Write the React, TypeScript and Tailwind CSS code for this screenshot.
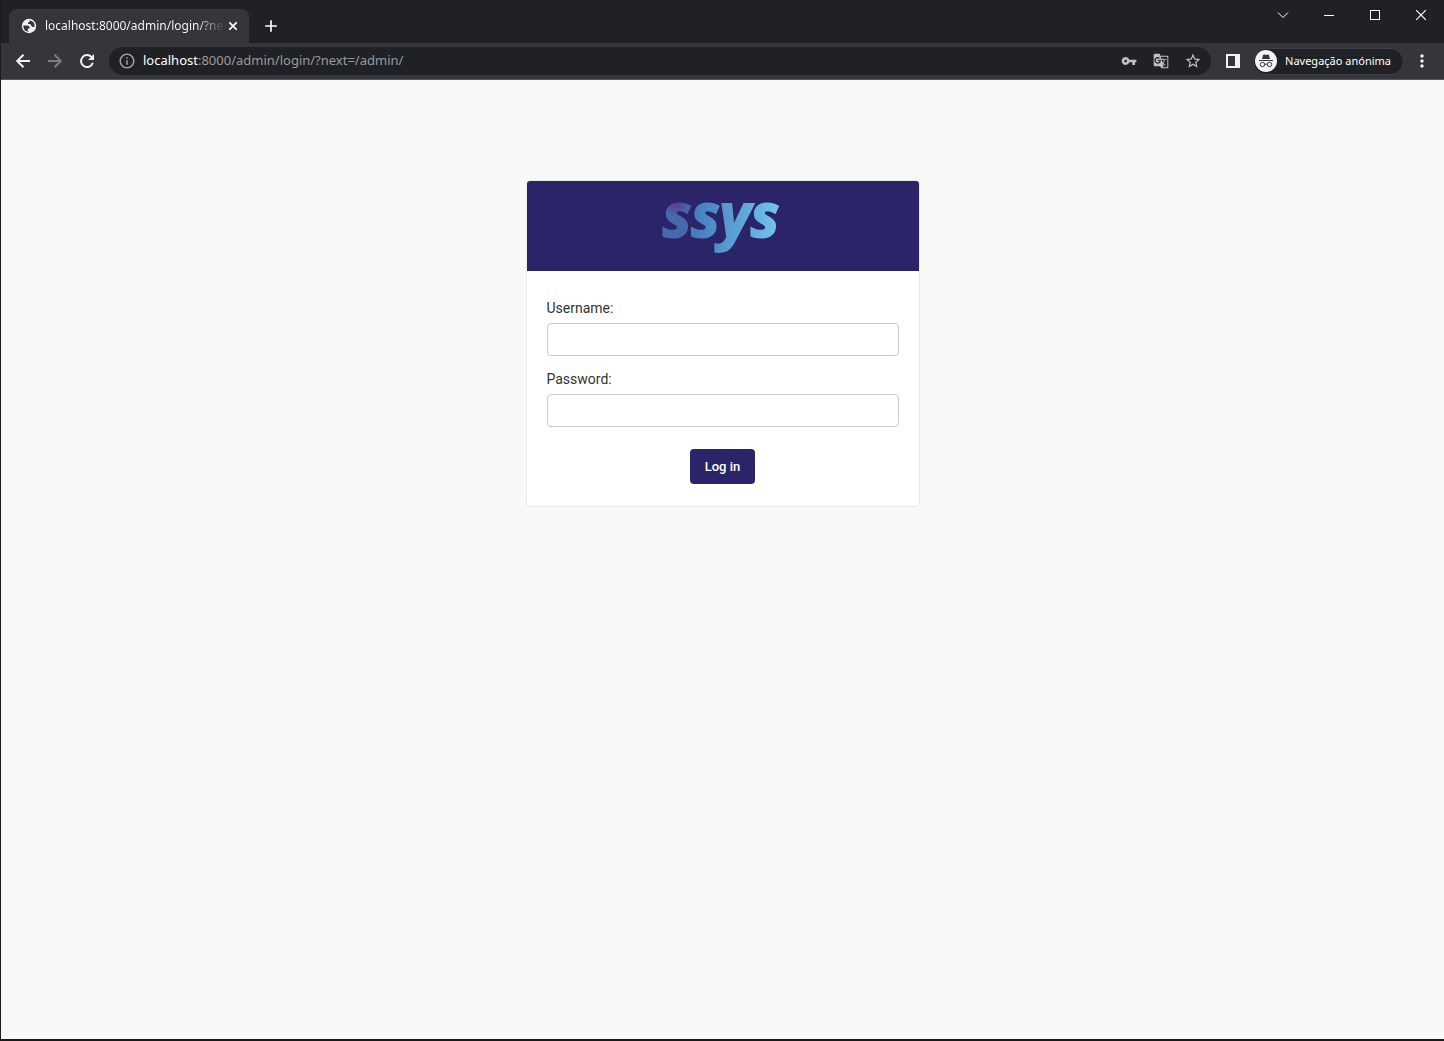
import type { ReactNode } from "react";
import {
  MdInfoOutline,
  MdVpnKey,
  MdGTranslate,
  MdStarBorder,
  MdMoreVert,
  MdAdd,
} from "react-icons/md";

function IconButton({ label, className, children }: { label: string; className: string; children: ReactNode }) {
  return (
    <button type="button" aria-label={label} className={`flex shrink-0 items-center justify-center ${className}`}>
      {children}
    </button>
  );
}

function LineIcon({ size, d }: { size: number; d: string }) {
  return (
    <svg width={size} height={size} viewBox={`0 0 ${size} ${size}`} fill="none" stroke="currentColor" strokeWidth="2">
      <path d={d} />
    </svg>
  );
}

function GlobeIcon() {
  return (
    <svg width="16" height="16" viewBox="0 0 16 16" className="shrink-0">
      <circle cx="8" cy="8" r="7.2" fill="#f1f3f4" />
      <path
        d="M2.3 7.4H6.2Q8.4 7.6 8.6 9.2V10.6H7L6.6 12.200 8 13.700Q2.300 13.600 2.300 7.400ZM8 2.300 9 3.400 7 4.600V6H9.200L10.200 7.800 11.800 9H13.600Q14.200 3 8 2.300Z"
        fill="#35363a"
      />
    </svg>
  );
}

function TitleBar() {
  return (
    <header className="flex h-[43px] items-end justify-between bg-[#202124] pl-2">
      <div className="flex items-end">
        <div className="flex h-[34px] w-60 items-center rounded-t-lg bg-[#35363a] pr-2 pl-3">
          <GlobeIcon />
          <span className="ml-2 min-w-0 flex-1 overflow-hidden whitespace-nowrap bg-linear-to-r from-white from-85% to-[#45464a] bg-clip-text text-xs text-transparent">
            localhost:8000/admin/login/?next=/admin/
          </span>
          <IconButton label="Close tab" className="ml-0.5 size-4 text-white">
            <svg width="8" height="8" viewBox="0 0 8 8" fill="none" stroke="currentColor" strokeWidth="1.7">
              <path d="M0 0 8 8M8 0 0 8" />
            </svg>
          </IconButton>
        </div>
        <IconButton label="New tab" className="ml-3 h-[34px] w-5 text-white">
          <MdAdd size={20} />
        </IconButton>
      </div>
      <div className="flex self-start text-white">
        <IconButton label="Search tabs" className="h-[30px] w-[46px]">
          <svg width="12" height="8" viewBox="0 0 12 8" fill="none" stroke="currentColor">
            <path d="M1 1.5 6 6.5 11 1.5" />
          </svg>
        </IconButton>
        <IconButton label="Minimize" className="h-[30px] w-[46px]">
          <svg width="10" height="1" viewBox="0 0 10 1" fill="currentColor">
            <rect width="10" height="1" />
          </svg>
        </IconButton>
        <IconButton label="Maximize" className="h-[30px] w-[46px]">
          <svg width="10" height="10" viewBox="0 0 10 10" fill="none" stroke="currentColor">
            <rect x="0.5" y="0.5" width="9" height="9" />
          </svg>
        </IconButton>
        <IconButton label="Close" className="h-[30px] w-[46px]">
          <svg width="10" height="10" viewBox="0 0 10 10" fill="none" stroke="currentColor" strokeWidth="1.2">
            <path d="M0 0 10 10M10 0 0 10" />
          </svg>
        </IconButton>
      </div>
    </header>
  );
}

function Toolbar() {
  return (
    <nav className="flex h-[37px] items-center border-b border-[#56575a] bg-[#35363a] px-3">
      <IconButton label="Back" className="size-5 text-[#f1f3f4]">
        <LineIcon size={20} d="M17 10H4.500M10.500 3.700 4.200 10 10.500 16.300" />
      </IconButton>
      <IconButton label="Forward" className="ml-3 size-5 text-[#7c7d80]">
        <LineIcon size={20} d="M3 10H15.500M9.500 3.700 15.800 10 9.500 16.300" />
      </IconButton>
      <IconButton label="Reload" className="ml-3 size-5 text-[#f1f3f4]">
        <svg width="20" height="20" viewBox="0 0 20 20" fill="none">
          <path d="M15.800 11.800A6 6 0 1 1 14.400 5.900" stroke="currentColor" strokeWidth="2" />
          <path d="M17 3V9H11Z" fill="currentColor" />
        </svg>
      </IconButton>
      <div className="ml-3 flex h-7 min-w-0 flex-1 items-center rounded-full bg-[#202124] px-2 text-[#bdc1c6]">
        <MdInfoOutline className="size-5 shrink-0 p-px text-[#9aa0a6]" />
        <p className="ml-1.5 min-w-0 flex-1 truncate text-[13px] text-[#9a9b9d]">
          <span className="text-white">localhost</span>:8000/admin/login/?next=/admin/
        </p>
        <IconButton label="Saved passwords" className="size-4">
          <MdVpnKey size={16} />
        </IconButton>
        <IconButton label="Translate" className="ml-4 size-4">
          <MdGTranslate size={16} />
        </IconButton>
        <IconButton label="Bookmark" className="ml-3.5 size-5">
          <MdStarBorder size={18} />
        </IconButton>
      </div>
      <IconButton label="Side panel" className="ml-3.5 size-4 text-[#f1f3f4]">
        <svg width="14" height="14" viewBox="0 0 14 14" fill="currentColor" fillRule="evenodd">
          <path d="M0 0H14V14H0ZM2 2V12H9V2Z" />
        </svg>
      </IconButton>
      <button
        type="button"
        className="ml-3 flex h-[27px] shrink-0 items-center rounded-full border border-[#3f4044] bg-[#202124] pr-3 pl-px text-[11px] text-white"
      >
        <svg width="22" height="22" viewBox="0 0 22 22" className="mr-2">
          <circle cx="11" cy="11" r="11" fill="#f1f3f4" />
          <path d="M7 9 8 5.2Q8.4 4.3 9.3 4.6L11 5.1 12.7 4.6Q13.6 4.3 14 5.2L15 9Z" fill="#35363a" />
          <g fill="none" stroke="#35363a">
            <path d="M4 10.5H18M9.5 14.5Q11 13.5 12.5 14.5" />
            <circle cx="7.5" cy="14.5" r="2.2" />
            <circle cx="14.5" cy="14.5" r="2.2" />
          </g>
        </svg>
        Navegação anónima
      </button>
      <IconButton label="Menu" className="ml-2 size-5 text-[#f1f3f4]">
        <MdMoreVert size={20} />
      </IconButton>
    </nav>
  );
}

function Logo() {
  return (
    <svg width="130" height="80" viewBox="0 0 130 80" role="img" aria-label="ssys" className="overflow-visible">
      <defs>
        <linearGradient id="brand" gradientUnits="userSpaceOnUse" x1="5" y1="0" x2="122" y2="0">
          <stop offset="0" stopColor="#4669ae" />
          <stop offset="0.25" stopColor="#447bbd" />
          <stop offset="0.6" stopColor="#5a9ed3" />
          <stop offset="1" stopColor="#72c5ee" />
        </linearGradient>
        <radialGradient id="accent" gradientUnits="userSpaceOnUse" cx="18" cy="23" r="13">
          <stop offset="0" stopColor="#5d3f92" />
          <stop offset="0.4" stopColor="#554c99" />
          <stop offset="1" stopColor="#4669ae" />
        </radialGradient>
      </defs>
      <text
        x="63"
        y="56"
        textAnchor="middle"
        fill="url(#brand)"
        stroke="url(#brand)"
        strokeWidth="2"
        className="font-['Open_Sans',sans-serif] text-[60px] font-bold italic"
      >
        <tspan fill="url(#accent)" stroke="url(#accent)">s</tspan>sys
      </text>
    </svg>
  );
}

function Field({ id, label, type }: { id: string; label: string; type: string }) {
  return (
    <div className="mb-3.5">
      <label htmlFor={id} className="mb-1.5 block text-sm leading-[18px] text-[#333]">
        {label}
      </label>
      <input id={id} name={id} type={type} className="block h-[33px] w-full rounded border border-[#ccc] bg-white px-2 text-sm" />
    </div>
  );
}

function LoginCard() {
  return (
    <section className="w-[394px] max-w-full rounded border border-[#eaeaea] bg-white font-['Roboto',sans-serif]">
      <div className="flex h-[90px] items-start justify-center rounded-t-[3px] bg-[#2c2468]">
        <Logo />
      </div>
      <form className="px-5 pt-7 pb-[22px]" onSubmit={(event) => event.preventDefault()}>
        <Field id="username" label="Username:" type="text" />
        <Field id="password" label="Password:" type="password" />
        <div className="flex justify-center pt-2">
          <button type="submit" className="h-[35px] rounded bg-[#2c2468] px-[15px] text-[13px] font-medium text-white">
            Log in
          </button>
        </div>
      </form>
    </section>
  );
}

export default function App() {
  return (
    <div className="flex min-h-screen flex-col border-b-2 border-l border-[#1b1a1c] bg-[#f8f8f8] font-['Noto_Sans',sans-serif]">
      <TitleBar />
      <Toolbar />
      <main className="flex flex-1 items-start justify-center pt-[100px]">
        <LoginCard />
      </main>
    </div>
  );
}
